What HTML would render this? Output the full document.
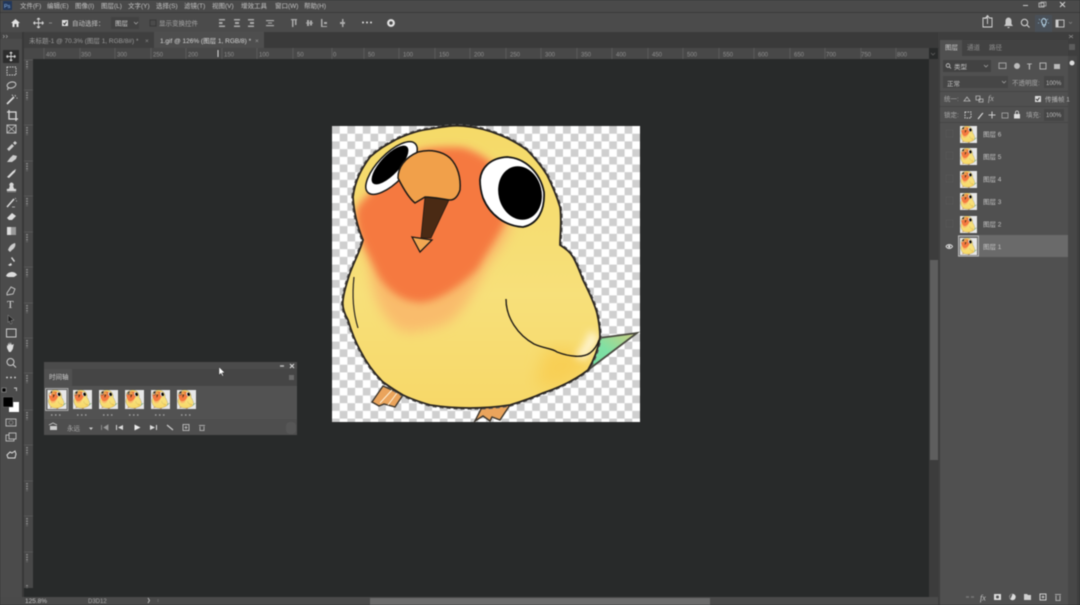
<!DOCTYPE html>
<html lang="zh"><head><meta charset="utf-8"><title>Photoshop</title>
<style>
html,body{margin:0;padding:0;background:#282a2a;width:1080px;height:605px;overflow:hidden}
svg.main{display:block;position:absolute;left:0;top:0;filter:blur(.6px)}
text{font-family:"Liberation Sans","Noto Sans CJK SC",sans-serif;fill:#c4c4c4;font-size:6.5px}
.ic{fill:none;stroke:#d8d8d8;stroke-width:1.2}
.f{fill:#d8d8d8;stroke:none}
.r text{fill:#8f8f8f;font-size:6px}
</style></head><body>
<svg class="main" width="1080" height="605" viewBox="0 0 1080 605" xmlns="http://www.w3.org/2000/svg">
<defs>
<pattern id="chk" width="15.4" height="15.4" patternUnits="userSpaceOnUse" x="332" y="126">
<rect width="15.4" height="15.4" fill="#fff"/><rect width="7.7" height="7.7" fill="#cfcfcf"/><rect x="7.7" y="7.7" width="7.7" height="7.7" fill="#cfcfcf"/>
</pattern>
<linearGradient id="yb" x1="0" y1="0" x2="0" y2="1"><stop offset="0" stop-color="#f5da68"/><stop offset=".6" stop-color="#f7e07a"/><stop offset="1" stop-color="#f7d868"/></linearGradient>
<linearGradient id="tl" x1="1" y1="0" x2="0" y2="1"><stop offset="0" stop-color="#cfcf80"/><stop offset=".5" stop-color="#7fe0a4"/><stop offset="1" stop-color="#6fdca0"/></linearGradient>
<filter id="soft" x="-20%" y="-20%" width="140%" height="140%"><feGaussianBlur stdDeviation="4"/></filter>
<filter id="soft3" x="-20%" y="-20%" width="140%" height="140%"><feGaussianBlur stdDeviation="6"/></filter>
<filter id="soft2" x="-20%" y="-20%" width="140%" height="140%"><feGaussianBlur stdDeviation="8"/></filter>
<path id="bp" d="M353 197C355 180 362 168 370 157C380 148 388 144 397 139C408 134 420 130 430 129C442 127 452 125 463 126C476 127 488 130 500 135C510 139 519 144 527 150C535 158 542 167 547 175C552 185 557 197 560 207C562 220 560 235 560 245C566 249 570 252 573 257C577 264 580 272 583 280C588 290 594 302 597 313C599 322 600 330 600 337C598 350 594 360 588 370C575 380 558 388 543 393C532 398 520 402 510 405C497 407 483 408 470 408C456 408 443 407 430 405C420 402 411 399 403 395C396 391 390 387 383 382C374 373 366 362 360 350C355 341 351 330 348 320C344 313 342 306 343 300C344 291 347 282 350 273C354 262 360 251 363 240C358 228 354 215 353 197Z"/>
<clipPath id="bodyclip"><use href="#bp"/></clipPath>
<g id="bird">
<path d="M372 402L383 386L392 390L403 395L395 407L384 404L379 406Z" fill="#eaa45c" stroke="#3c352c" stroke-width="1.4"/>
<path d="M380 403L392 390M388 405L397 393" stroke="#fff2d8" stroke-width="1"/>
<path d="M475 421L482 407L510 405L500 420L492 417L490 421L483 416Z" fill="#eaa45c" stroke="#3c352c" stroke-width="1.4"/>
<path d="M599 338L637 333L588 370L583 372Z" fill="url(#tl)" stroke="#4a4a40" stroke-width="1.8"/>
<use href="#bp" fill="none" stroke="#5c5c5c" stroke-width="3.6" stroke-dasharray="4 3"/>
<use href="#bp" fill="url(#yb)"/>
<g clip-path="url(#bodyclip)">
<path d="M545 350C565 345 585 350 590 368L560 388L535 385Z" fill="#f8cf55" filter="url(#soft2)"/>
<path d="M372 285C376 305 388 326 405 332C422 332 440 328 452 320C468 305 478 285 488 265C500 250 510 235 512 222L500 170L470 150L420 150C395 165 370 190 358 207C354 225 362 245 368 262Z" fill="#f9bc6c" filter="url(#soft3)"/>
<path d="M358 207C368 195 385 178 417 152C430 147 450 147 463 148C475 152 488 158 495 168L505 222C497 238 488 250 478 268C465 282 445 298 425 302C405 304 388 292 378 275C372 262 366 250 361 240C356 225 355 215 358 207Z" fill="#f5793f" filter="url(#soft)"/>
<path d="M585 360C590 352 596 345 599 338L590 330C585 345 578 352 575 357Z" fill="#fff4cf" filter="url(#soft)"/>
</g>
<use href="#bp" fill="none" stroke="#2a2520" stroke-width="1.800"/>
<path d="M354 277C352 295 353 312 358 328" fill="none" stroke="#2a2520" stroke-width="1.2"/>
<path d="M506 299C506 318 518 335 534 344C545 349 552 348 557 352C570 357 583 358 590 353C594 350 597 346 599 340" fill="none" stroke="#1e1a16" stroke-width="1.4"/>
<ellipse cx="391.500" cy="168" rx="34" ry="14" transform="rotate(-46 391.500 168)" fill="#fff" stroke="#1a1a1a" stroke-width="1.500"/>
<ellipse cx="390" cy="165" rx="25" ry="9.500" transform="rotate(-47 390 165)" fill="#000"/>
<path d="M425 197L449 200L431 238L421 238Z" fill="#4a2a14" stroke="#221710" stroke-width=".8"/>
<path d="M412 237L432 240L420 252Z" fill="#f2a752" stroke="#1e1a16" stroke-width="1.300"/>
<path d="M398 178C398 168 404 158 418 152C430 149 442 151 450 158C458 166 461 178 460 190C458 196 455 200 450 200C442 199 433 197 425 197L415 203C410 199 404 190 398 178Z" fill="#f1a04a" stroke="#1e1a16" stroke-width="1.500"/>
<path d="M480 180C481 168 490 158 507 157C525 158 540 172 544 192C545 210 538 224 523 227C505 226 490 215 483 198C481 192 480 186 480 180Z" fill="#fff" stroke="#141414" stroke-width="1.800"/>
<ellipse cx="520" cy="193" rx="21.500" ry="27" transform="rotate(-14 520 193)" fill="#000"/>
</g>
<g id="thumb"><rect x="332" y="126" width="308" height="296" fill="url(#chk)"/><use href="#bird"/></g>
</defs>

<!-- base -->
<rect width="1080" height="605" fill="#282a2a"/>
<!-- menu bar -->
<rect width="1080" height="12" fill="#4a4a4a"/>
<rect x="3" y="1" width="9" height="9" fill="#22375a"/><text x="4" y="8" style="font-size:5.500px;fill:#8fb8e8">Ps</text>
<g style="fill:#bdbdbd">
<text x="20" y="8">文件(F)</text><text x="47" y="8">编辑(E)</text><text x="75" y="8">图像(I)</text><text x="101" y="8">图层(L)</text><text x="128" y="8">文字(Y)</text><text x="156" y="8">选择(S)</text><text x="184" y="8">滤镜(T)</text><text x="212" y="8">视图(V)</text><text x="241" y="8">增效工具</text><text x="275" y="8">窗口(W)</text><text x="304" y="8">帮助(H)</text>
</g>
<path d="M1023 5.500h5" stroke="#c8c8c8" stroke-width="1"/><rect x="1039" y="3" width="5" height="4" fill="none" stroke="#c8c8c8" stroke-width=".8"/><rect x="1041" y="2" width="5" height="4" fill="none" stroke="#c8c8c8" stroke-width=".6"/><path d="M1060 2l5 5M1065 2l-5 5" stroke="#d4d4d4" stroke-width="1"/>
<!-- options bar -->
<rect y="12" width="1080" height="1" fill="#3a3a3a"/>
<rect y="13" width="1080" height="19" fill="#4b4b4b"/>
<path d="M11 23l4.500-4 4.500 4h-1.500v4h-2v-3h-2v3h-2v-4z" fill="#e4e4e4"/>
<path d="M38.500 18v10M33.500 23h10M38.500 18l-1.500 1.500M38.500 18l1.500 1.500M38.500 28l-1.500-1.500M38.500 28l1.500-1.500M33.500 23l1.500-1.500M33.500 23l1.500 1.500M43.500 23l-1.500-1.500M43.500 23l-1.500 1.500" class="ic" style="stroke-width:.9"/>
<path d="M49 23h3" stroke="#999" stroke-width=".8"/>
<rect x="62" y="20" width="6" height="6" fill="#e0e0e0"/><path d="M63.300 23l1.300 1.500 2-3" stroke="#333" stroke-width="1" fill="none"/>
<text x="72" y="25.500">自动选择：</text>
<rect x="111" y="17" width="28" height="12" fill="#424242"/><text x="115" y="25.500" style="fill:#cfcfcf">图层</text><path d="M134 22l2 2 2-2" stroke="#aaa" fill="none" stroke-width=".7"/>
<rect x="150" y="20" width="6" height="6" fill="none" stroke="#333" stroke-width=".8"/><text x="159" y="25.500" style="fill:#a8a8a8">显示变换控件</text>
<g fill="#aaa">
<rect x="219" y="19" width="6" height="1.500"/><rect x="219" y="22" width="3.500" height="2"/><rect x="219" y="25.500" width="6" height="1.500"/>
<rect x="234" y="19" width="6" height="1.500"/><rect x="235" y="22" width="4" height="2"/><rect x="234" y="25.500" width="6" height="1.500"/>
<rect x="248" y="19" width="6" height="1.500"/><rect x="250" y="22" width="4" height="2"/><rect x="248" y="25.500" width="6" height="1.500"/>
<rect x="266" y="20" width="8" height="1.200"/><rect x="268" y="22.500" width="4" height="1"/><rect x="266" y="25" width="8" height="1.200"/>
<rect x="291" y="19" width="6" height="1.200"/><rect x="292" y="20" width="1.500" height="7"/><rect x="295" y="20" width="1.500" height="5"/>
<rect x="306" y="22.500" width="7" height="1"/><rect x="307" y="20" width="2" height="6"/><rect x="310" y="20.500" width="2" height="5"/>
<rect x="321" y="19" width="1.500" height="8"/><rect x="324" y="22" width="3" height="2"/><rect x="321" y="26" width="6" height="1"/>
<rect x="342" y="19" width="1.500" height="8"/><rect x="340" y="22" width="5" height="2"/>
</g>
<g fill="#dcdcdc"><circle cx="363" cy="22.500" r="1"/><circle cx="367" cy="22.500" r="1"/><circle cx="371" cy="22.500" r="1"/></g>
<circle cx="391" cy="23" r="2.800" fill="none" stroke="#e4e4e4" stroke-width="2.200"/>
<!-- right icons -->
<path d="M985 19v-1h2M989 18h3v9h-9v-9h2M987.500 24v-8M985.500 18l2-2.500 2 2.500" class="ic" style="stroke-width:.9"/>
<path d="M1004 26h9l-1.500-2v-3c0-2-1.500-3.500-3-3.500s-3 1.500-3 3.500v3zM1007.500 27h2v1h-2z" fill="#c8c8c8"/>
<circle cx="1024.500" cy="22.500" r="3.200" fill="none" stroke="#d8d8d8"/><path d="M1027 25l2.500 2.500" stroke="#d8d8d8"/>
<rect x="1035" y="15" width="17" height="17" fill="#495058"/>
<path d="M1043.500 18.500a3 3 0 0 1 2 5v1.500h-3v-1.500a3 3 0 0 1 1-5zM1043 26.500h2" fill="none" stroke="#bcdcf0" stroke-width=".9"/><path d="M1039 19l1 1M1048 19l-1 1M1038 23h1M1048 23h1" stroke="#9cc4e0" stroke-width=".7"/>
<rect x="1056" y="20" width="8" height="7" fill="none" stroke="#ccc" stroke-width=".9"/><rect x="1056" y="20" width="2.500" height="7" fill="#ccc"/><path d="M1069 22l1.500 1.500 1.500-1.500" stroke="#888" fill="none" stroke-width=".7"/>

<!-- tabs -->
<rect y="32" width="940" height="16" fill="#3a3a3a"/>
<rect y="32" x="0" width="24" height="7" fill="#444"/>
<path d="M3 35l1.500 1.500-1.500 1.500M6 35l1.500 1.500L6 38" fill="none" stroke="#aaa" stroke-width=".6"/>
<rect x="24" y="32" width="130" height="16" fill="#3f3f3f"/>
<rect x="154" y="32" width="110" height="16" fill="#4e4e4e"/>
<text x="29" y="43" style="fill:#9c9c9c">未标题-1 @ 70.3% (图层 1, RGB/8#) *</text>
<text x="145" y="43" style="fill:#8c8c8c">×</text>
<text x="160" y="43" style="fill:#d8d8d8">1.gif @ 126% (图层 1, RGB/8) *</text>
<text x="255" y="43" style="fill:#9c9c9c">×</text>

<!-- rulers -->
<rect x="24" y="48" width="905" height="11" fill="#484848"/>
<rect x="24" y="48" width="9" height="540" fill="#484848"/>
<g class="r">
<text x="46" y="56.500">400</text><text x="81" y="56.500">350</text><text x="117" y="56.500">300</text><text x="153" y="56.500">250</text><text x="188" y="56.500">200</text><text x="224" y="56.500">150</text><text x="259" y="56.500">100</text><text x="297" y="56.500">50</text><text x="333" y="56.500">0</text><text x="368" y="56.500">50</text><text x="403" y="56.500">100</text><text x="439" y="56.500">150</text><text x="474" y="56.500">200</text><text x="510" y="56.500">250</text><text x="545" y="56.500">300</text><text x="581" y="56.500">350</text><text x="616" y="56.500">400</text><text x="652" y="56.500">450</text><text x="687" y="56.500">500</text><text x="723" y="56.500">550</text><text x="758" y="56.500">600</text><text x="794" y="56.500">650</text><text x="826" y="56.500">700</text><text x="861" y="56.500">750</text><text x="897" y="56.500">800</text>
</g>
<path d="M44 48v11M80 48v11M115 48v11M151 48v11M186 48v11M222 48v11M257 48v11M293 48v11M332 48v11M364 48v11M399 48v11M435 48v11M470 48v11M506 48v11M541 48v11M577 48v11M612 48v11M648 48v11M683 48v11M719 48v11M754 48v11M790 48v11M825 48v11M861 48v11M896 48v11" stroke="#6a6a6a" stroke-width=".6"/>
<path d="M218 50v7" stroke="#ddd" stroke-width="1"/>
<path d="M27 61v8M27 92v8M27 127v8M27 163v8M27 198v8M27 234v8M27 269v8M27 305v8M27 340v8M27 375v8M27 412v8M27 447v8M27 483v8M27 518v8M27 554v8M27 585v3" stroke="#858585" stroke-width="1.800" stroke-dasharray="1.500 1"/>
<path d="M24 60h9M24 90h9M24 125h9M24 161h9M24 196h9M24 232h9M24 267h9M24 303h9M24 338h9M24 373h9M24 410h9M24 445h9M24 481h9M24 516h9M24 552h9" stroke="#666" stroke-width=".6"/>

<!-- toolbar -->
<rect x="0" y="39" width="22" height="566" fill="#4b4b4b"/>
<rect x="22" y="32" width="2" height="573" fill="#383838"/>
<rect x="3" y="50" width="16" height="13" fill="#2d2d2d"/>
<path d="M11 52v9M6.500 56.500h9M11 52l-1.300 1.300M11 52l1.300 1.300M11 61l-1.300-1.300M11 61l1.300-1.300M6.500 56.500l1.300-1.300M6.500 56.500l1.300 1.300M15.500 56.500l-1.300-1.300M15.500 56.500l-1.300 1.300" class="ic" style="stroke-width:.9"/>
<rect x="7" y="67" width="9" height="8" fill="none" stroke="#ccc" stroke-dasharray="1.500 1" stroke-width="1"/>
<ellipse cx="11.500" cy="85" rx="4.500" ry="3" fill="none" stroke="#ccc" transform="rotate(-15 11.500 85)"/><path d="M8 88l-.5 2" stroke="#ccc"/>
<path d="M7 104l7-7" stroke="#e0e0e0" stroke-width="1.600"/><path d="M15 95l.6 1.500M13 96l-1-1.300M16.500 98l1 .2" stroke="#ddd" stroke-width=".8"/>
<path d="M9 110v9h9M7 112h9v9" class="ic" style="stroke-width:1.300"/>
<rect x="7" y="125" width="9" height="8" fill="none" stroke="#bbb"/><path d="M7 125l9 8M16 125l-9 8" stroke="#bbb" stroke-width=".8"/>
<path d="M7 149l5-5 2 2-5 5zM13 143l2-2 2 2-2 2z" fill="#ccc"/>
<path d="M7 162l3-4 3-3 4 1-1 3-4 3zM9 155l1-1M14 162l1 1" fill="#ccc"/>
<path d="M7 177l6-6 3-2-1 3-6 6z" fill="#ddd"/>
<path d="M10 186a2 2 0 1 1 3 0l1 3h2v2H7v-2h2zM7 192h9" fill="#d8d8d8" stroke="#d8d8d8" stroke-width=".3"/>
<path d="M7 207l7-8" stroke="#ddd" stroke-width="1.500"/><path d="M15 198l1 1M16 201l1 0M12 207l3 0" stroke="#ccc" stroke-width=".7"/>
<path d="M7 218l5-5 4 3-4 4H9z" fill="#ddd"/>
<rect x="7" y="227" width="9" height="8" fill="#999"/><rect x="7" y="227" width="4" height="8" fill="#ddd"/>
<path d="M8 250c1-3 3-6 7-7 1 2 0 5-3 7l-2 2z" fill="#ccc"/>
<path d="M8 265l3-2 1 2-2 1zM11 258l3 4 1-1-3-4z" fill="#ddd"/>
<path d="M6 276c1-3 4-4 6-4s4 1 5 3l-3 2H8z" fill="#ddd"/>
<path d="M7 293l4-6 4 2-2 5-6 1z" fill="none" stroke="#ccc" stroke-width=".9"/>
<text x="7" y="308" style="font-size:11px;fill:#ddd;font-family:'Liberation Serif',serif">T</text>
<path d="M8 315l6 5-3 .5 1 3-1.500.5-1-3-1.500 1.500z" fill="#222" stroke="#aaa" stroke-width=".4"/>
<rect x="6.500" y="329" width="9.500" height="8" fill="none" stroke="#ccc"/>
<path d="M7 348v-3l1 1v-3l1.200 2v-3l1.300 3v-3l1.300 3 2-1-1 5-2 3H9z" fill="#ddd"/>
<circle cx="10.500" cy="362" r="3.500" fill="none" stroke="#ccc"/><path d="M13 364.500l3 3" stroke="#ccc" stroke-width="1.100"/>
<g fill="#ddd"><circle cx="7" cy="377.500" r=".9"/><circle cx="11" cy="377.500" r=".9"/><circle cx="15" cy="377.500" r=".9"/></g>
<rect x="2" y="388" width="4" height="4" fill="#000" stroke="#ddd" stroke-width=".4"/>
<path d="M14 388h2.500v3" fill="none" stroke="#ccc" stroke-width=".9"/>
<rect x="9" y="402" width="10" height="10" fill="#fff"/>
<rect x="3" y="397" width="10" height="10" fill="#000" stroke="#777" stroke-width=".5"/>
<rect x="6" y="419" width="10" height="7" fill="none" stroke="#ccc" stroke-width=".8"/><circle cx="11" cy="422.500" r="2" fill="none" stroke="#999" stroke-width=".6"/>
<rect x="6" y="435" width="8" height="6" fill="none" stroke="#ccc" stroke-width=".8"/><rect x="9" y="433" width="7" height="6" fill="#4b4b4b" stroke="#ccc" stroke-width=".8"/>
<path d="M7 455l3-3 2 1 3-2 1 3-1 4H8z" fill="none" stroke="#ddd" stroke-width="1"/>

<!-- canvas area -->
<rect x="33" y="59" width="896" height="538" fill="#282a2a"/>
<rect x="332" y="126" width="308" height="296" fill="url(#chk)"/>
<use href="#bird"/>

<!-- timeline panel -->
<rect x="44" y="362" width="253" height="73" fill="#4b4b4b"/>
<rect x="44" y="369" width="253" height="17" fill="#454545"/>
<rect x="44" y="369" width="28" height="17" fill="#505050"/>
<text x="49" y="379" style="fill:#cfcfcf">时间轴</text>
<path d="M280 366h3M284 366h-1" stroke="#bbb" stroke-width="1.500"/><path d="M290 364l4 4M294 364l-4 4" stroke="#ddd"/>
<rect x="289" y="375" width="5" height="5" fill="#6a6a6a"/>
<rect x="44" y="386" width="253" height="33" fill="#525252"/>
<rect x="44" y="419" width="253" height="16" fill="#4e4e4e"/>
<rect x="45.500" y="388.500" width="22.500" height="22" fill="#646464" stroke="#bcbcbc" stroke-width=".8"/>
<g id="frames">
<svg x="47.500" y="390" width="19" height="19" viewBox="332 126 308 296" preserveAspectRatio="none"><use href="#thumb"/></svg>
<svg x="73" y="390" width="19" height="19" viewBox="332 126 308 296" preserveAspectRatio="none"><use href="#thumb"/></svg>
<svg x="99" y="390" width="19" height="19" viewBox="332 126 308 296" preserveAspectRatio="none"><use href="#thumb"/></svg>
<svg x="125" y="390" width="19" height="19" viewBox="332 126 308 296" preserveAspectRatio="none"><use href="#thumb"/></svg>
<svg x="151" y="390" width="19" height="19" viewBox="332 126 308 296" preserveAspectRatio="none"><use href="#thumb"/></svg>
<svg x="177" y="390" width="19" height="19" viewBox="332 126 308 296" preserveAspectRatio="none"><use href="#thumb"/></svg>
</g>
<g style="font-size:5px">
<text x="49" y="395.500" style="font-size:5px;fill:#fff">1</text><text x="75" y="395.500" style="font-size:5px;fill:#555">2</text><text x="101" y="395.500" style="font-size:5px;fill:#555">3</text><text x="127" y="395.500" style="font-size:5px;fill:#555">4</text><text x="153" y="395.500" style="font-size:5px;fill:#555">5</text><text x="179" y="395.500" style="font-size:5px;fill:#555">6</text>
</g>
<path d="M51 415h12M77 415h12M103 415h12M129 415h12M155 415h12M181 415h12" stroke="#aaa" stroke-width="1.200" stroke-dasharray="1.500 2.500"/>
<rect x="50" y="426" width="7" height="4" fill="#ccc"/><path d="M49 425l4-2 4 2" stroke="#ccc" stroke-width=".8" fill="none"/>
<text x="67" y="430.500" style="fill:#aaa">永远</text><path d="M89 427.500h4l-2 2.500z" fill="#ccc"/>
<path d="M101.500 425v5M108 425v5l-4-2.500z" stroke="#999" stroke-width=".8" fill="#999"/>
<path d="M116 425v5h1v-5zM123 425v5l-5-2.500z" fill="#ddd"/>
<path d="M134.500 424.500v6l6-3z" fill="#eee"/>
<path d="M150 425v5l5-2.500zM156 425v5h1v-5z" fill="#ddd"/>
<path d="M167 425l6 5" stroke="#ccc" stroke-width="1.200"/>
<rect x="183" y="424.500" width="6" height="6" fill="none" stroke="#ccc" stroke-width=".8"/><path d="M184.500 427.500h3M186 426v3" stroke="#ccc" stroke-width=".7"/>
<path d="M199 425.500h6M200 426.500v4h4v-4" fill="none" stroke="#aaa" stroke-width="1"/>
<rect x="286" y="422" width="10" height="12" rx="4" fill="#565656"/>
<!-- cursor -->
<path d="M219 367v8l2-1.700 1.500 3 1-.5-1.300-3h2.600z" fill="#fff" stroke="#222" stroke-width=".4"/>

<!-- scrollbars -->
<rect x="929" y="59" width="9" height="538" fill="#3c3c3c"/>
<rect x="930" y="260" width="8" height="200" fill="#5e5e5e"/>
<path d="M931 53l2 2 2-2" stroke="#666" fill="none" stroke-width=".7"/>
<rect x="0" y="597" width="938" height="8" fill="#4a4a4a"/>
<rect x="370" y="598" width="340" height="7" fill="#6b6b6b"/>
<text x="25" y="603" style="fill:#c0c0c0;font-size:6.500px">125.8%</text>
<text x="88" y="603" style="fill:#a8a8a8;font-size:6px">D3D12</text>
<path d="M148 598l1.500 2.500-1.500 2.500" stroke="#ccc" fill="none" stroke-width=".8"/><path d="M158 599v3" stroke="#666"/>

<!-- right panel -->
<rect x="938" y="32" width="142" height="573" fill="#3e3e3e"/>
<rect x="940" y="56" width="128" height="549" fill="#505050"/>
<rect x="940" y="40" width="128" height="16" fill="#424242"/>
<rect x="940" y="40" width="22" height="16" fill="#505050"/>
<text x="945" y="49.500" style="fill:#cfcfcf">图层</text><text x="967" y="49.500" style="fill:#8f8f8f">通道</text><text x="989" y="49.500" style="fill:#8f8f8f">路径</text>
<rect x="1068" y="56" width="9" height="549" fill="#474747"/>
<rect x="1069" y="44" width="6" height="6" fill="#5c5c5c"/>
<circle cx="1072" cy="63" r="2.500" fill="#ddd"/>
<path d="M1069 35l2 1.500-2 1.500M1073 35l-2 1.500 2 1.500" stroke="#999" fill="none" stroke-width=".6"/>
<!-- filter row -->
<rect x="943" y="60" width="48" height="12" fill="#424242"/>
<circle cx="948" cy="65.500" r="1.800" fill="none" stroke="#ccc" stroke-width=".8"/><path d="M949.500 67l1.500 1.500" stroke="#ccc" stroke-width=".8"/>
<text x="954" y="69" style="fill:#c4c4c4">类型</text><path d="M984 65l2 2 2-2" stroke="#aaa" fill="none" stroke-width=".7"/>
<rect x="999" y="63" width="7" height="5.500" fill="none" stroke="#aaa" stroke-width=".9"/>
<circle cx="1017" cy="66" r="3" fill="#bbb"/>
<text x="1027" y="69.500" style="font-size:8px;font-weight:bold;fill:#bbb">T</text>
<rect x="1040" y="63" width="6" height="6" fill="none" stroke="#bbb" stroke-width=".9"/>
<rect x="1054" y="64" width="6" height="5" fill="#bbb"/>
<!-- blend row -->
<rect x="943" y="76" width="65" height="12" fill="#464646"/>
<text x="947" y="86" style="fill:#c4c4c4">正常</text><path d="M1002 81l2 2 2-2" stroke="#aaa" fill="none" stroke-width=".7"/>
<text x="1012" y="85" style="fill:#a8a8a8">不透明度:</text>
<rect x="1044" y="76" width="20" height="12" fill="#464646"/><text x="1046" y="85" style="fill:#bbb;font-size:6px">100%</text>
<!-- unify row -->
<rect x="940" y="91" width="128" height="1" fill="#454545"/>
<text x="944" y="101" style="fill:#a8a8a8">统一:</text>
<path d="M964 101l3-4 3 4zM976 96h4v4h-4zM979 99h4v3h-4z" fill="none" stroke="#bbb" stroke-width=".8"/>
<text x="988" y="101" style="font-size:8px;font-style:italic;fill:#bbb;font-family:'Liberation Serif',serif">fx</text>
<rect x="1035" y="96" width="6" height="6" fill="#ddd"/><path d="M1036 99l1.500 1.500 2-3" stroke="#333" fill="none"/>
<text x="1045" y="101.500" style="fill:#b8b8b8">传播帧 1</text>
<!-- lock row -->
<rect x="940" y="106" width="128" height="1" fill="#454545"/>
<text x="944" y="117" style="fill:#a8a8a8">锁定:</text>
<rect x="965" y="112" width="6" height="6" fill="none" stroke="#ccc" stroke-width="1" stroke-dasharray="1.500 1"/>
<path d="M978 119l4-5 1-1" stroke="#ddd" stroke-width="1.100"/>
<path d="M992 111.500v7M988.500 115h7" stroke="#ccc" stroke-width="1"/>
<rect x="1002" y="113" width="6" height="5" fill="none" stroke="#aaa" stroke-width=".8"/>
<rect x="1014" y="114" width="6" height="4.500" fill="#ddd"/><path d="M1015.500 114v-1.500a1.500 1.500 0 0 1 3 0v1.500" fill="none" stroke="#ddd" stroke-width=".8"/>
<text x="1026" y="117" style="fill:#a8a8a8">填充:</text>
<rect x="1044" y="109" width="20" height="12" fill="#464646"/><text x="1046" y="117" style="fill:#bbb;font-size:6px">100%</text>
<!-- layer list -->
<rect x="940" y="122" width="128" height="1" fill="#454545"/>
<rect x="958" y="235" width="110" height="22" fill="#6a6a6a"/>
<rect x="958.500" y="236" width="20" height="20" fill="none" stroke="#cfcfcf" stroke-width=".8"/>
<g stroke="#5a5a5a" stroke-width=".6" fill="none"><rect x="946" y="130" width="7" height="7"/><rect x="946" y="152" width="7" height="7"/><rect x="946" y="175" width="7" height="7"/><rect x="946" y="197" width="7" height="7"/><rect x="946" y="220" width="7" height="7"/></g>
<svg x="960" y="126" width="17" height="17" viewBox="332 126 308 296" preserveAspectRatio="none"><use href="#thumb"/></svg>
<svg x="960" y="148" width="17" height="17" viewBox="332 126 308 296" preserveAspectRatio="none"><use href="#thumb"/></svg>
<svg x="960" y="171" width="17" height="17" viewBox="332 126 308 296" preserveAspectRatio="none"><use href="#thumb"/></svg>
<svg x="960" y="193" width="17" height="17" viewBox="332 126 308 296" preserveAspectRatio="none"><use href="#thumb"/></svg>
<svg x="960" y="216" width="17" height="17" viewBox="332 126 308 296" preserveAspectRatio="none"><use href="#thumb"/></svg>
<svg x="960" y="238" width="17" height="17" viewBox="332 126 308 296" preserveAspectRatio="none"><use href="#thumb"/></svg>
<g style="fill:#c4c4c4">
<text x="983" y="136.500">图层 6</text><text x="983" y="159">图层 5</text><text x="983" y="181.500">图层 4</text><text x="983" y="204">图层 3</text><text x="983" y="226.500">图层 2</text><text x="983" y="249">图层 1</text>
</g>
<path d="M946 246.500c1.500-2.500 5-2.500 6.500 0-1.500 2.500-5 2.500-6.500 0z" fill="none" stroke="#e8e8e8" stroke-width=".9"/><circle cx="949.200" cy="246.500" r="1.100" fill="#e8e8e8"/>
<!-- panel bottom icons -->
<g>
<path d="M966 597h3M971 597h3" stroke="#777" stroke-width="1.500"/>
<text x="980" y="600.500" style="font-size:8px;font-style:italic;fill:#ccc;font-family:'Liberation Serif',serif">fx</text>
<rect x="994" y="594" width="7" height="6" fill="#ddd"/><circle cx="997.500" cy="597" r="1.500" fill="#505050"/>
<circle cx="1012.500" cy="597" r="3.200" fill="#ddd"/><path d="M1012.500 594a3 3 0 0 0 -2 5z" fill="#505050"/>
<path d="M1024 594h3l1 1h3v5h-7z" fill="#d0d0d0"/>
<rect x="1040" y="594" width="6" height="6" fill="none" stroke="#ddd" stroke-width=".9"/><path d="M1041.500 597h3M1043 595.500v3" stroke="#ddd" stroke-width=".7"/>
<path d="M1055 594.500h6M1056 595.500v5h4v-5" fill="none" stroke="#aaa" stroke-width="1.100"/>
</g>
</svg>
</body></html>
